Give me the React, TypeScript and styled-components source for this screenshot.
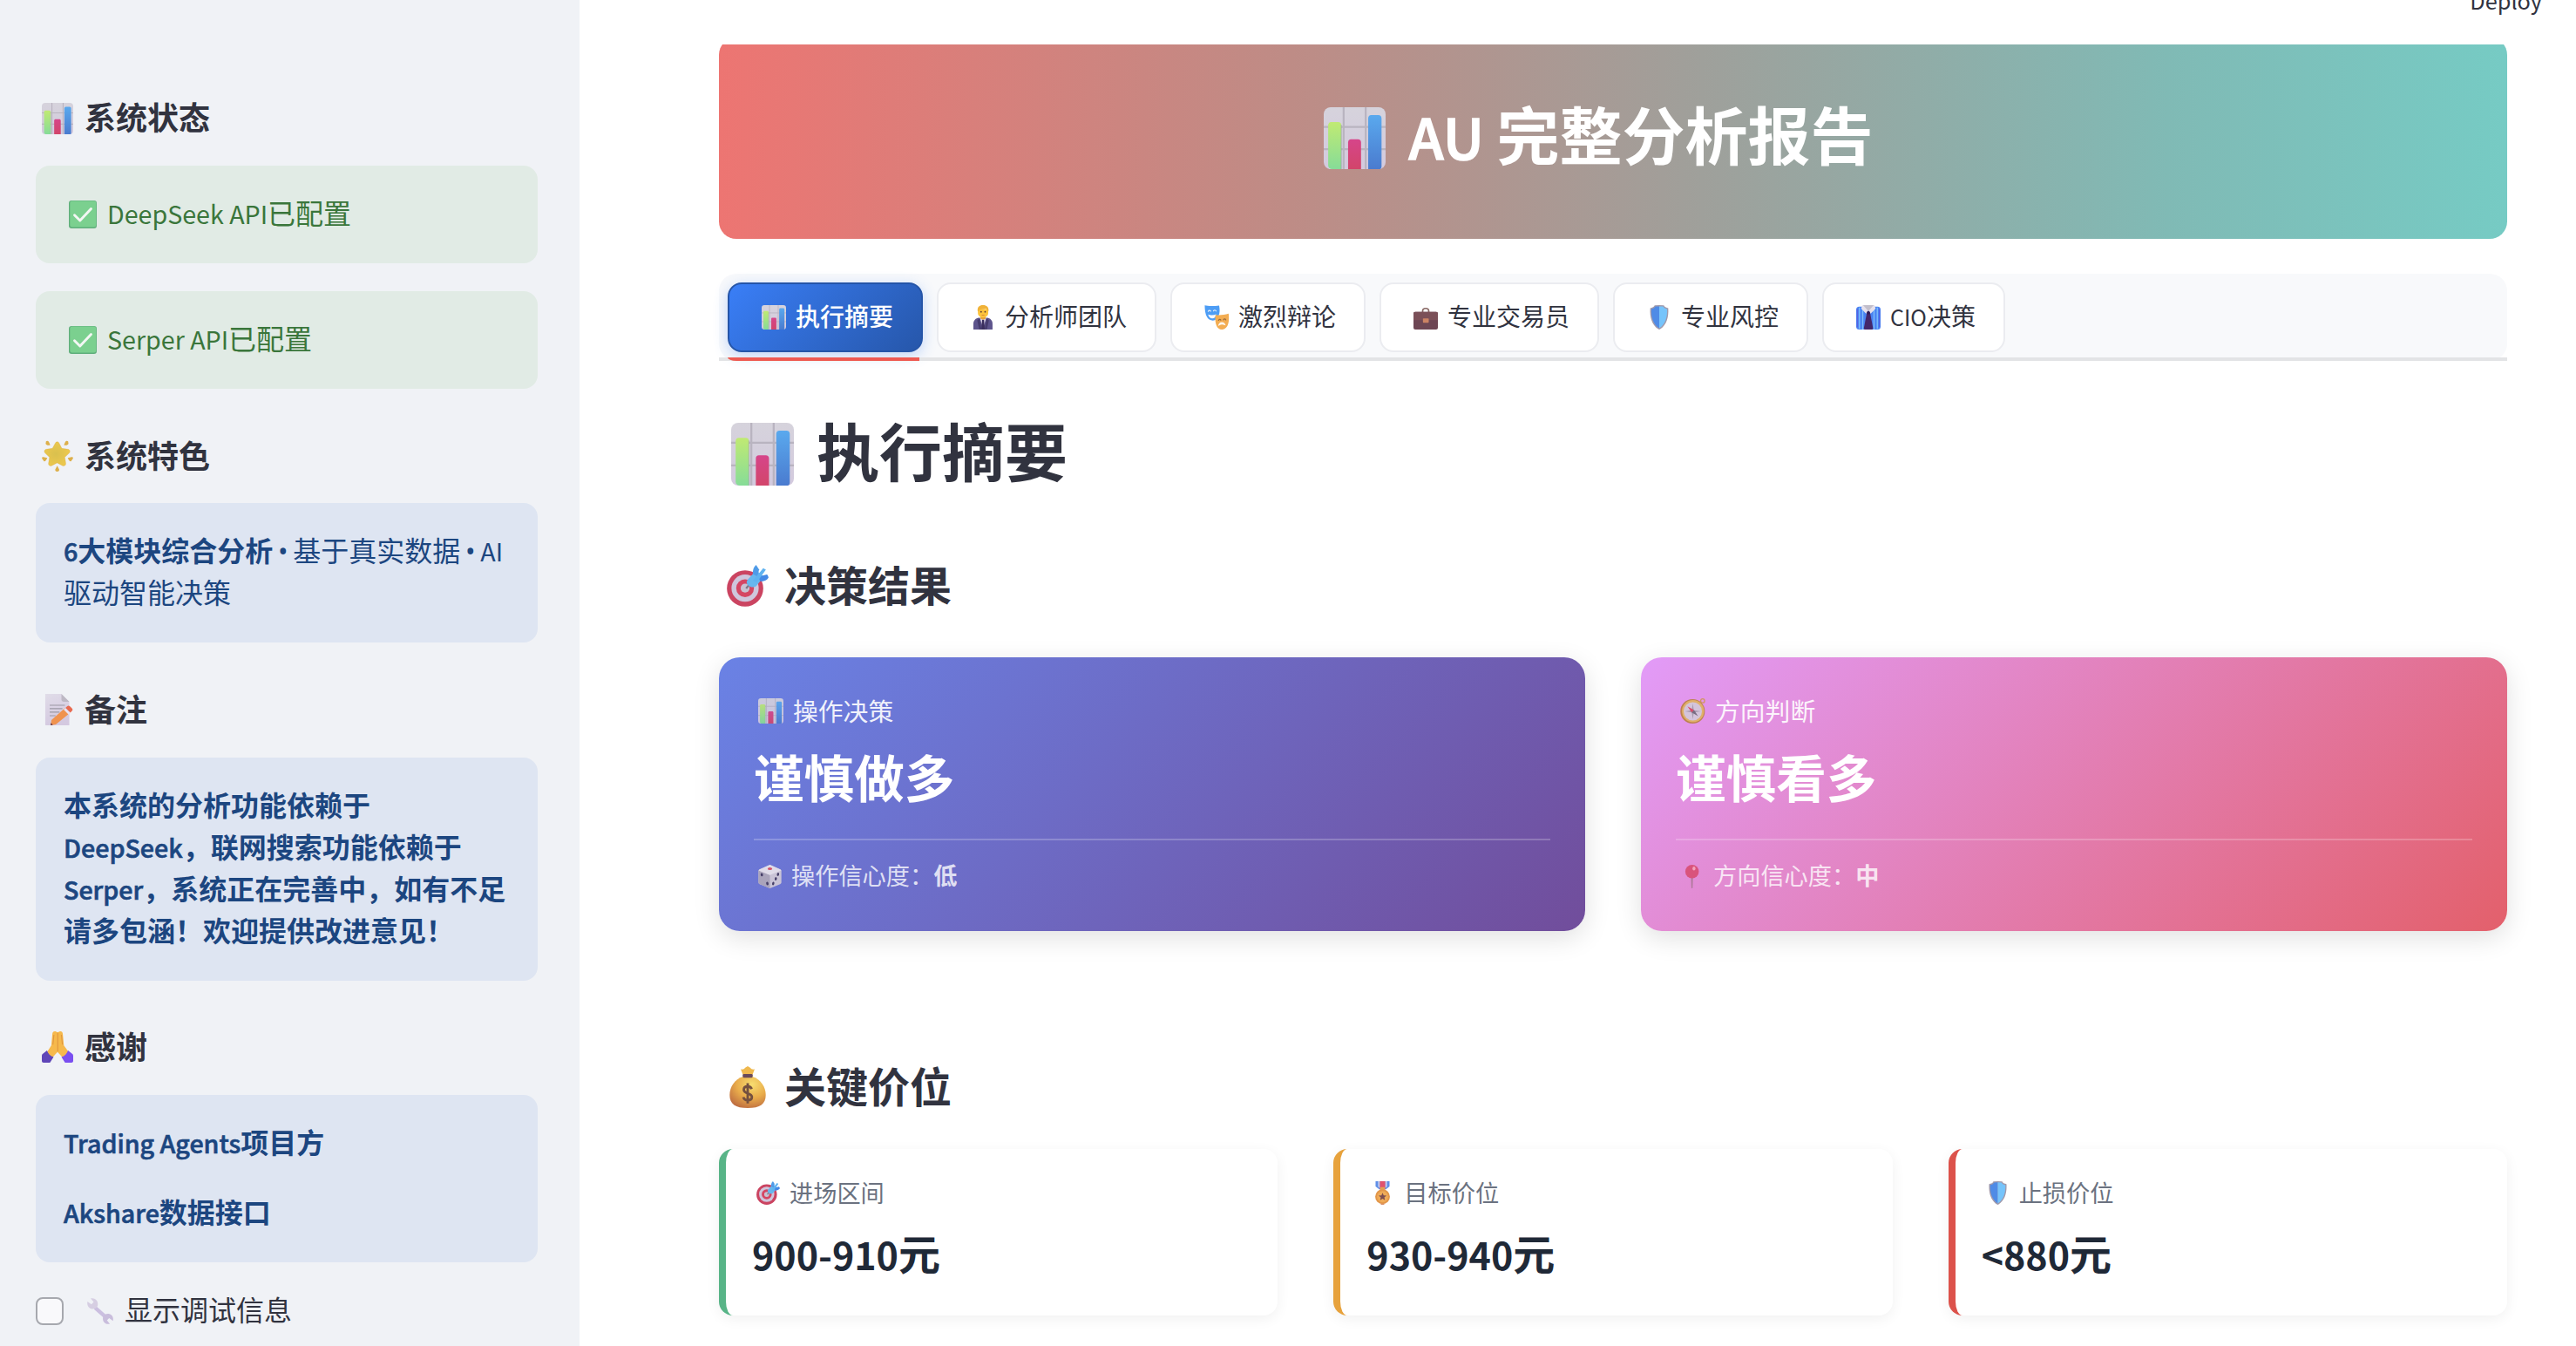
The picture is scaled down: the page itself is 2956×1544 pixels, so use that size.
import React from "react";
import styled, { createGlobalStyle, css } from "styled-components";

const GlobalStyle = createGlobalStyle`
  * { box-sizing: border-box; }
  html, body { margin: 0; padding: 0; }
  body {
    background: #fff;
    color: #31333f;
    font-family: "Noto Sans CJK SC", "Noto Sans", sans-serif;
    font-size: 32px;
    line-height: 48px;
    overflow: hidden;
  }
`;

/* ---------- icons ---------- */

const Glyph = styled.svg<{ $size: number }>`
  display: block;
  flex: none;
  width: ${(p) => p.$size}px;
  height: ${(p) => p.$size}px;
  overflow: visible;
`;

const Chart = () => (
  <>
    <defs>
      <linearGradient id="c-bg" x1="0" y1="0" x2="0" y2="1">
        <stop offset="0" stopColor="#d6d3dc" />
        <stop offset="1" stopColor="#d3cade" />
      </linearGradient>
      <linearGradient id="c-g" x1="0" y1="0" x2="0" y2="1">
        <stop offset="0" stopColor="#c0ea73" />
        <stop offset="1" stopColor="#86dc98" />
      </linearGradient>
      <linearGradient id="c-r" x1="0" y1="0" x2="0" y2="1">
        <stop offset="0" stopColor="#d6458a" />
        <stop offset="1" stopColor="#d2456a" />
      </linearGradient>
      <linearGradient id="c-b" x1="0" y1="0" x2="0" y2="1">
        <stop offset="0" stopColor="#5aa9ee" />
        <stop offset="1" stopColor="#4a7bcf" />
      </linearGradient>
    </defs>
    <rect width="32" height="32" rx="3.6" fill="url(#c-bg)" />
    <path d="M10.3 0v32M21.7 0v32M0 10.2h32M0 21.7h32" stroke="#b9b4c0" strokeWidth="1" />
    <path d="M2.300 9.400c0-1 .6-1.700 1.500-1.700h3.700c1 0 1.600.7 1.600 1.700V32H4.200C3 32 2.300 31 2.300 30z" fill="url(#c-g)" />
    <path d="M12.600 18.200c0-1 .6-1.600 1.500-1.600h3.600c1 0 1.600.6 1.600 1.600V32h-6.700z" fill="url(#c-r)" />
    <path d="M23 5.700c0-1 .6-1.700 1.500-1.700h3.800c1 0 1.600.7 1.600 1.700V30.600c0 .9-.5 1.400-1.200 1.400H23z" fill="url(#c-b)" />
    <path d="M9.100 9v23" stroke="#8e8aa0" strokeOpacity=".35" strokeWidth=".6" />
  </>
);

const Check = () => (
  <>
    <rect width="32" height="32" rx="3.2" fill="#5fae7b" />
    <rect x="1.3" y=".6" width="30" height="29.8" rx="2.6" fill="#7bd08f" />
    <path d="M6.5 16.800l6.300 6.200L25.500 9.500" fill="none" stroke="#f3f7f4" strokeWidth="2.9" strokeLinecap="round" strokeLinejoin="round" />
  </>
);

const Star = () => (
  <>
    <defs>
      <radialGradient id="s-g" cx=".45" cy=".5" r=".6">
        <stop offset="0" stopColor="#d9c04e" />
        <stop offset="1" stopColor="#efc94e" />
      </radialGradient>
    </defs>
    <path d="M13.800 1.900c.9-1.700 2.900-1.700 3.700 0l2.700 5.400 6 .9c1.900.3 2.600 2.500 1.200 3.900l-4.300 4.300 1 6.200c.3 1.900-1.600 3.200-3.300 2.300L15.600 22l-5.300 2.900c-1.700.9-3.500-.4-3.200-2.300l1-6.200-4.300-4.300C2.400 10.700 3.100 8.500 5 8.200l6-.9z" transform="translate(-.6 1) scale(1.04 1)" fill="url(#s-g)" stroke="#d9a441" strokeOpacity=".5" strokeWidth=".5" />
    <path d="M4.300 1.200c1-.9 2.300-.5 2.800.4l1.500 3.200c-2.400.7-4 .2-4.700-1.300zM26.800 1.200c-1-.9-2.300-.5-2.800.4l-1.500 3.200c2.400.7 4 .2 4.700-1.300zM.2 18.600c-.2-1 .5-1.600 1.400-1.400l4 .9c-.8 2.200-1.900 3.700-3.300 3.500zM31.800 18.600c.2-1-.5-1.600-1.400-1.400l-4 .9c.8 2.200 1.900 3.700 3.300 3.500zM15.700 26l2 3.800c.3 1.300-.6 2.200-2 2.200s-2.300-.9-2-2.200z" fill="#ddb04b" />
  </>
);

const Memo = () => (
  <>
    <defs>
      <linearGradient id="m-p" x1="0" y1="0" x2=".3" y2="1">
        <stop offset="0" stopColor="#e0dce8" />
        <stop offset="1" stopColor="#d4c9e0" />
      </linearGradient>
    </defs>
    <path d="M3.500 0H20l8 8v24H4.500c-.6 0-1-.4-1-1z" fill="url(#m-p)" />
    <path d="M20 0l8 8h-5.500C21 8 20 7 20 5.500z" fill="#bdb8c4" />
    <path d="M8 11.600h15.500M8 15h13M8 18.500h10M8 22.200h6" stroke="#9b98a4" strokeWidth="1" />
    <path d="M23.500 14.500l5 5L14.300 31 9 32l.8-5.400z" fill="#f0934f" />
    <path d="M22.300 16l5 5 1.800-1.700-5-5z" fill="#e9e3f2" />
    <path d="M24.200 14.200l1.600-1.600c1-1 2-.8 2.900 0l2 2c.9 1 .9 1.900 0 2.800l-1.600 1.800z" fill="#e86a50" />
    <path d="M9.300 29.500L9 32l2.300-.5z" fill="#5b3348" />
  </>
);

const Pray = () => (
  <>
    <path d="M10.800 2.200c.5-1.800 1.900-2.500 3.400-2l1.900.9 2-.9c1.700-.4 2.800.4 3.200 2l1.200 12.300 5.500 7.500-6 5.500-6-6.500-6 6.500-5.500-5 5.200-8z" fill="#f6b94c" />
    <path d="M16.200 1.500v19M12.300 3.500l-1 10M20 3.500l1 10" stroke="#e0963f" strokeWidth="1" fill="none" />
    <path d="M5.300 19.500c1 3.400 3.300 5.600 6.700 6.800L8.300 32H1.800C.7 32 0 31.300 0 30v-5c0-.8.3-1.400.8-1.800z" fill="#5f46b8" />
    <path d="M26.700 19.500c-1 3.400-3.300 5.600-6.700 6.800l3.700 5.700h6.500c1.100 0 1.800-.7 1.800-2v-5c0-.8-.3-1.400-.8-1.800z" fill="#7a4ff0" />
  </>
);

const Wrench = () => (
  <>
    <path d="M9.800 11.800l12.400 11" stroke="#cbbfe0" strokeWidth="4.6" />
    <path d="M4.300.4L8 4.800 5.200 7.700.4 4.200C-.3 8 1 12.300 5.600 13.200c3 .5 6-1 7.300-4C13.900 5 11.200-.6 4.300.4z" fill="#d6cee2" />
    <path d="M27.800 31.700l-3.500-4.500 2.600-2.800 4.800 3.700c.8-4-.8-8-5.200-8.900-3-.5-5.900 1-7 3.900-1.200 4.200 1.500 9.600 8.300 8.600z" fill="#c9bddc" />
  </>
);

const Person = () => (
  <>
    <path d="M3.400 32v-7.500C3.400 20 6.500 17 10.500 16.500h11c4 .5 7 3.500 7 8V32z" fill="#5d548c" />
    <path d="M11.800 16.300h8.600L16.100 30z" fill="#e6e0f0" />
    <path d="M14.800 19h2.600l.9 13h-4.400z" fill="#3b2f5e" />
    <path d="M11.500 17l2.500 15h-3L8.500 20zM20.700 17l-2.500 15h3l2.500-12z" fill="#463c6e" />
    <path d="M12.800 13.500h6.600v4.200c-1 1.600-5.600 1.600-6.600 0z" fill="#e6a038" />
    <path d="M9.300 5h13.600v5.300c0 3.600-3 6-6.800 6s-6.800-2.400-6.800-6z" fill="#fdc43c" />
    <path d="M8.900 7.500C8.600 2.500 11 0 16 0s7.600 2.500 7.300 7.500l-1 1.200c-.3-1.900-1.200-3.200-2.500-4-2.800 1.200-6.700.6-8.300 1.600l-1.400 2.400z" fill="#f0b238" />
    <circle cx="13.500" cy="8.800" r="1.050" fill="#5a3a30" />
    <circle cx="18.800" cy="8.800" r="1.050" fill="#5a3a30" />
    <path d="M13.700 12.800c1.500 1 3.400 1 4.800 0z" fill="#b44a38" />
  </>
);

const Masks = () => (
  <>
    <path d="M.5.300c5 1.300 13 .9 18.900.2 1 5 1 9.500-.6 13.300-1.400 3.900-4 6.400-7.600 6.600C4.200 19.600.7 14 .5.300z" fill="#4d9df5" />
    <path d="M5 8.200c.8-1.500 2.600-1.500 3.400-.2M12 7.600c.8-1.500 2.800-1.300 3.400.2" stroke="#e9f1fb" strokeWidth="1.300" fill="none" strokeLinecap="round" />
    <path d="M4.900 12.400c3 1.300 7.400 1.100 10.700-.4-.5 3.300-2.200 5.400-5 5.500-2.800.2-5-2.100-5.700-5.100z" fill="#f8f8fc" />
    <path d="M14.500 12.800c5 .9 11.500.1 17.300-1.600 1.200 9.500 0 19.600-8 20.700-6.900.8-10.400-6.900-9.300-19.100z" fill="#f3ad52" />
    <path d="M18.600 20c.6-1.500 2.200-1.700 3-.4M25 19.300c.7-1.500 2.500-1.500 3.200 0" stroke="#9a6a3c" strokeWidth="1.300" fill="none" strokeLinecap="round" />
    <path d="M17.900 27.400c.6-3 2.400-5 5-5.100 2.600 0 4.500 1.700 5.100 4.400-1.500-.2-2.800-1.300-5-1.200-2.100.1-3.300 1.700-5.100 1.900z" fill="#fdf6ee" />
  </>
);

const Briefcase = () => (
  <>
    <path d="M12 10V7.500C12 5.500 13.500 4.300 16 4.300s4 1.200 4 3.200V10" stroke="#8a6a66" strokeWidth="1.9" fill="none" />
    <rect x="0" y="8.800" width="32" height="23.200" rx="2.400" fill="#6d4654" />
    <path d="M0 10.800c0-1.200.8-2 2-2h28c1.200 0 2 .8 2 2v9H0z" fill="#7b5058" />
    <rect x="12.400" y="17.300" width="7.600" height="5.800" rx=".8" fill="#cc8364" />
  </>
);

const Shield = () => (
  <>
    <path d="M16 0l6 .3c.8 1.700 2 2.700 4 3l1.800.6c.8 12.100-2.300 22.100-10.600 27.600L16 32l-1.200-.5C6.500 26 3.400 16 4.200 3.900L6 3.300c2-.3 3.200-1.300 4-3z" fill="#a09aac" />
    <path d="M16 1.600l-5 .1C9.900 3.600 8.300 4.700 5.700 5 5.200 15.500 8 25 16 30.300z" fill="#4f8be6" />
    <path d="M16 1.600l5 .1c1.100 1.900 2.700 3 5.300 3.300.5 10.500-2.300 20-10.300 25.300z" fill="#76c4fb" />
  </>
);

const Shirt = () => (
  <>
    <rect y="2" width="32" height="30" rx="4" fill="#4a83f2" />
    <path d="M4.300 3v28M8.600 3v29M23.400 3v29M27.700 3v28" stroke="#7fc0fb" strokeWidth="1.5" />
    <path d="M1.500 5v24M30.500 5v24" stroke="#5c55dc" strokeWidth="1" />
    <path d="M14 10h4.200l4 20.500L21 32H11l-1-1.500z" fill="#44276a" />
    <path d="M8 0h16l1.500 4.500-6.500 6.500-3-3.500-3 3.500-6.500-6.500z" fill="#e6e1ec" />
    <path d="M9 0h14l-7 8z" fill="#c3bfcb" />
    <path d="M13.700 9l2.300-1.700L18.300 9l-1 3h-2.600z" fill="#2f1b55" />
  </>
);

const Target = () => (
  <>
    <circle cx="14" cy="18" r="13.900" fill="#cb4461" />
    <circle cx="14" cy="17.800" r="10.400" fill="#cfc6dc" />
    <circle cx="14" cy="17.800" r="6.800" fill="#d54663" />
    <circle cx="14" cy="17.800" r="3.400" fill="#c9c2d2" />
    <path d="M14.800 18L21 10.600" stroke="#7d7a88" strokeWidth="1.500" />
    <path d="M15.800 11.500L22.500 4.200 28.300 9l-5.600 7c-2 1.600-4.600 1.200-6.300-.4-1.300-1.300-1.600-2.600-.6-4.100z" fill="#67b7ee" />
    <path d="M19.900 6.800c0-3.300.7-5 2.500-6.800L24.700 3.500 23.500 9z" fill="#4f9be8" />
    <path d="M24.200 9l6.500-1.700c.8.700 1.100 1.600 1.200 2.600-1.300 2-3.400 2.800-6.400 2.800z" fill="#4489e6" />
    <path d="M20 12l7.900-9.500 2 1.200-7 9.800z" fill="#5fb2f0" />
  </>
);

const Compass = () => (
  <>
    <circle cx="28.500" cy="3.200" r="2.500" fill="none" stroke="#cf9850" strokeWidth="1.400" />
    <circle cx="15.800" cy="16.500" r="15.500" fill="#b9803f" />
    <circle cx="16.300" cy="16.300" r="14" fill="#e0b25c" />
    <circle cx="16" cy="16.500" r="11.600" fill="#d3cada" />
    <path d="M16 6.500l1.300 8.700 8.700 1.300-8.700 1.300L16 26.500l-1.300-8.700L6 16.500l8.700-1.300z" fill="#9f9aa8" />
    <path d="M9.300 10.300l8.300 4.500-3 3z" fill="#d9435e" />
    <path d="M22.700 22.700l-5.100-7.900-3 3z" fill="#6d6878" />
  </>
);

const Dice = () => (
  <>
    <path d="M16 0l14 6.300c1 .5 1.600 1.200 1.600 2.300v15.200c0 1.200-.6 2-1.700 2.500L16 32 2.200 26.300C1 25.800.4 25 .4 23.800V8.600c0-1.100.6-1.800 1.600-2.300z" fill="#c9c3d6" />
    <path d="M.6 7.600L16 14v18L2.200 26.300C1 25.800.4 25 .4 23.800z" fill="#aaa4bb" />
    <path d="M16 0l14 6.300L31.400 7.600 16 14 .6 7.600 2 6.300z" fill="#e0dce9" />
    <ellipse cx="16" cy="5.300" rx="3.100" ry="1.800" fill="#d4546a" />
    <g fill="#463f68">
      <ellipse cx="5" cy="13.500" rx="1.600" ry="2.300" transform="rotate(-12 5 13.500)" />
      <ellipse cx="12.500" cy="25.500" rx="1.600" ry="2.300" transform="rotate(-12 12.500 25.500)" />
      <ellipse cx="27" cy="13" rx="1.500" ry="2.300" transform="rotate(12 27 13)" />
      <ellipse cx="24" cy="19" rx="1.500" ry="2.300" transform="rotate(12 24 19)" />
      <ellipse cx="20.500" cy="25.500" rx="1.500" ry="2.300" transform="rotate(12 20.500 25.500)" />
    </g>
  </>
);

const Pin = () => (
  <>
    <path d="M14.800 17h2.600l-.4 14c-.2 1.300-1.600 1.300-1.800 0z" fill="#b07a9c" />
    <circle cx="16.200" cy="9.200" r="9.200" fill="#d9537c" />
    <ellipse cx="18.800" cy="5" rx="2" ry="2.600" fill="#f3a3bd" />
  </>
);

const MoneyBag = () => (
  <>
    <defs>
      <radialGradient id="b-g" cx=".62" cy=".25" r=".85">
        <stop offset="0" stopColor="#f7dd70" />
        <stop offset=".5" stopColor="#e9ac4b" />
        <stop offset="1" stopColor="#b9663f" />
      </radialGradient>
    </defs>
    <path d="M12.300 6.500L10.700 2.400c1.700.2 2.700-.1 3.400-1.200L16 0l1.900 1.200c.7 1.100 1.700 1.400 3.400 1.200l-1.600 4.100z" fill="#efb84e" />
    <path d="M12.400 8h7.200c6.300 1.800 10.200 8 10.200 14 0 7-4.300 10-13.800 10S2.200 29 2.200 22c0-6 3.900-12.200 10.200-14z" fill="url(#b-g)" />
    <rect x="12.200" y="6" width="7.600" height="2.800" rx=".9" fill="#69495a" />
    <path d="M19 17.500c-.4-1.300-1.400-2-3-2-1.800 0-3 .9-3 2.500 0 3.700 6.200 2 6.200 5.500 0 1.600-1.300 2.600-3.200 2.600s-3-.9-3.300-2.400M16 13v15.500" fill="none" stroke="#74503f" strokeWidth="1.900" />
  </>
);

const Medal = () => (
  <>
    <path d="M6.500 0h19v7L20.500 11h-9L6.500 7z" fill="#5f8fe8" />
    <path d="M10 0h2.400v9.500L10 7.500zM19.600 0H22v7.500l-2.400 2z" fill="#c9d0ee" />
    <path d="M12.400 0h7.200v11h-7.200z" fill="#e0526d" />
    <rect x="12.800" y="8" width="6.400" height="4.500" rx="1" fill="#e4a052" />
    <circle cx="16" cy="21" r="10" fill="#e2964a" />
    <circle cx="16" cy="21" r="7.600" fill="#efab58" />
    <path d="M16 15.600l1.500 3.600 3.900.3-3 2.500.9 3.800-3.300-2-3.300 2 .9-3.800-3-2.500 3.900-.3z" fill="#7c4d50" />
    <path d="M12.600 30.500h6.800L17.600 32h-3.200z" fill="#d98f6a" />
  </>
);

const icons = {
  chart: Chart, check: Check, star: Star, memo: Memo, pray: Pray, wrench: Wrench,
  person: Person, masks: Masks, briefcase: Briefcase, shield: Shield, shirt: Shirt,
  target: Target, compass: Compass, dice: Dice, pin: Pin, bag: MoneyBag, medal: Medal,
};
type IconName = keyof typeof icons;

const Icon = ({ name, size }: { name: IconName; size: number }) => {
  const Drawing = icons[name];
  return (
    <Glyph $size={size} viewBox="0 0 32 32" aria-hidden="true">
      <Drawing />
    </Glyph>
  );
};

/* ---------- shared text pieces ---------- */

/* Latin letters run large beside Han characters in this family. */
const Latin = styled.span<{ $semi?: boolean }>`
  font-size: 0.895em;
  line-height: 0;
  ${(p) =>
    p.$semi &&
    css`
      font-weight: 500;
      -webkit-text-stroke: 0.022em currentColor;
    `}
`;

/* Optical lift that centres Han glyphs on the icon beside them. */
const Words = styled.span<{ $lift?: number }>`
  margin-top: -${(p) => p.$lift ?? 0.12}em;
  white-space: pre;
`;

const Bullet = styled.span`
  display: inline-block;
  width: 23px;
  font-family: "Open Sans", "Noto Sans", sans-serif;
  line-height: 1;
  text-align: center;
`;

const Line = styled.div<{ $lead: number; $gap: number }>`
  display: flex;
  align-items: center;
  padding-left: ${(p) => p.$lead}px;
  gap: ${(p) => p.$gap}px;
`;

/* ---------- layout ---------- */

const Page = styled.div`
  display: flex;
  width: 100%;
  height: 1544px;
  overflow: hidden;
`;

const Sidebar = styled.aside`
  flex: none;
  width: 665px;
  height: 100%;
  padding: 59px 48px 0 41px;
  background: #f0f2f6;
`;

const SideHeading = styled.h3`
  display: flex;
  align-items: center;
  gap: 13px;
  height: 131.2px;
  margin: 0;
  padding: 22px 0 0 7px;
  font-size: 36px;
  line-height: 44px;
  font-weight: 700;
`;

const Notice = styled.div<{ $tone: "success" | "info" }>`
  padding: ${(p) => (p.$tone === "success" ? "32px 0 32px 32px" : "29px 0 35px 32px")};
  border-radius: 16px;
  color: ${(p) => (p.$tone === "success" ? "#3a763b" : "#1c4680")};
  background: ${(p) => (p.$tone === "success" ? "#e1ebe5" : "#dee5f2")};
`;

const NoticeLine = styled(Line)`
  height: 48px;
`;

const NoticeStack = styled.div`
  display: flex;
  flex-direction: column;
  gap: 32px;
`;

const Paragraph = styled.p`
  margin: 0;
  white-space: nowrap;
  & + & { margin-top: 32px; }
`;

const Strong = styled.strong`
  font-weight: 700;
`;

const DebugToggle = styled.label`
  display: flex;
  align-items: center;
  height: 48px;
  margin-top: 32px;
`;

const Box = styled.span`
  width: 32px;
  height: 32px;
  border: 2px solid #a6a8ae;
  border-radius: 8px;
  background: #f9f9fb;
`;

const Main = styled.main`
  flex: 1;
  min-width: 0;
  height: 100%;
  overflow: hidden;
  background: #fff;
`;

const TopBar = styled.header`
  display: flex;
  justify-content: flex-end;
  align-items: flex-start;
  height: 51px;
  padding-right: 39px;
  font-size: 28.3px;
  line-height: 11px;
`;

const Content = styled.div`
  display: flex;
  flex-direction: column;
  height: 1493px;
  padding: 0 79px 0 160px;
  overflow: hidden;
`;

const Banner = styled.div`
  flex: none;
  display: flex;
  justify-content: center;
  align-items: center;
  gap: 27px;
  height: 231px;
  margin-top: -8px;
  padding: 0 34px 0 0;
  border-radius: 20px;
  color: #fff;
  font-size: 72px;
  line-height: 86px;
  font-weight: 700;
  background: linear-gradient(90deg, #ed7572, #be8c86 32%, #9fa09b 55%, #80bab5 81%, #76cbc4);
`;

const TabBar = styled.nav`
  flex: none;
  position: relative;
  display: flex;
  gap: 16px;
  height: 100px;
  margin-top: 40px;
  padding: 10px;
  border-radius: 20px;
  background: #f8f9fb;
  &::after {
    content: "";
    position: absolute;
    left: 0;
    right: 0;
    bottom: 0;
    height: 4px;
    background: #e3e4e6;
  }
`;

const Tab = styled.button<{ $active?: boolean; $width: number }>`
  display: flex;
  align-items: center;
  gap: 11px;
  width: ${(p) => p.$width}px;
  height: 80px;
  padding: 0 0 0 37px;
  border: 2px solid #ebecf0;
  border-radius: 16px;
  background: #fff;
  color: #31333f;
  font: inherit;
  font-size: 28px;
  white-space: nowrap;
  ${(p) =>
    p.$active &&
    css`
      border-color: #2555a8;
      color: #fff;
      font-weight: 500;
      background: linear-gradient(135deg, #3a7ff8, #2656a9) border-box;
      box-shadow: 0 4px 16px rgba(59, 130, 246, 0.3);
    `}
`;

const TabMarker = styled.span`
  position: absolute;
  z-index: 1;
  left: 10px;
  bottom: 0;
  width: 220px;
  height: 4px;
  border-bottom-left-radius: 10px 4px;
  background: #ee5a52;
`;

const PageTitle = styled.h1`
  display: flex;
  align-items: center;
  gap: 26px;
  flex: none;
  height: 210px;
  margin: 0;
  padding: 3px 0 0 14px;
  font-size: 72px;
  line-height: 86px;
  font-weight: 700;
`;

const SectionTitle = styled.h2<{ $above: number; $below: number }>`
  display: flex;
  align-items: center;
  gap: 18px;
  flex: none;
  height: 94px;
  margin: ${(p) => p.$above}px 0 ${(p) => p.$below}px;
  padding: 1px 0 0 9px;
  font-size: 48px;
  line-height: 58px;
  font-weight: 700;
`;

const Columns = styled.div<{ $count: number }>`
  flex: none;
  display: grid;
  grid-template-columns: repeat(${(p) => p.$count}, 1fr);
  gap: 64px;
`;

const DecisionCard = styled.section<{ $from: string; $to: string }>`
  height: 314px;
  padding: 40px;
  border-radius: 24px;
  color: #fff;
  background: linear-gradient(135deg, ${(p) => p.$from}, ${(p) => p.$to});
  box-shadow: 0 8px 30px rgba(0, 0, 0, 0.12);
`;

const DecisionLabel = styled(Line)`
  height: 43px;
  font-size: 28.8px;
  opacity: 0.9;
`;

const DecisionValue = styled.div`
  height: 125px;
  padding-top: 10px;
  font-size: 57.6px;
  line-height: 86px;
  font-weight: 700;
`;

const DecisionFoot = styled(Line)`
  height: 84px;
  border-top: 2px solid rgba(255, 255, 255, 0.22);
  font-size: 27.2px;
  color: rgba(255, 255, 255, 0.8);
`;

const PriceCard = styled.section<{ $accent: string }>`
  height: 191px;
  padding: 30px 32px 0 30px;
  border-left: 8px solid ${(p) => p.$accent};
  border-radius: 16px;
  background: #fff;
  box-shadow: 0 4px 16px rgba(0, 0, 0, 0.06);
`;

const PriceLabel = styled(Line)`
  height: 41px;
  color: #6b7280;
  font-size: 27.2px;
`;

const PriceValue = styled.div`
  padding-top: 11px;
  color: #1f2937;
  font-size: 48px;
  line-height: 72px;
  font-weight: 700;
`;

/* ---------- data ---------- */

const tabs: { icon: IconName; label: React.ReactNode; width: number }[] = [
  { icon: "chart", label: "执行摘要", width: 224 },
  { icon: "person", label: "分析师团队", width: 252 },
  { icon: "masks", label: "激烈辩论", width: 224 },
  { icon: "briefcase", label: "专业交易员", width: 252 },
  { icon: "shield", label: "专业风控", width: 224 },
  { icon: "shirt", label: <><Latin>CIO</Latin>决策</>, width: 210 },
];

const decisions = [
  { icon: "chart", label: "操作决策", value: "谨慎做多", footIcon: "dice", foot: "操作信心度：", level: "低", from: "#6a82e5", to: "#714d9b" },
  { icon: "compass", label: "方向判断", value: "谨慎看多", footIcon: "pin", foot: "方向信心度：", level: "中", from: "#e29bf8", to: "#e3606b" },
] as const;

const prices = [
  { icon: "target", label: "进场区间", value: "900-910", accent: "#58b487" },
  { icon: "medal", label: "目标价位", value: "930-940", accent: "#e7a23c" },
  { icon: "shield", label: "止损价位", value: "<880", accent: "#dc524b" },
] as const;

const apis = ["DeepSeek API", "Serper API"];

export default function App() {
  return (
    <>
      <GlobalStyle />
      <Page>
        <Sidebar>
          <SideHeading><Icon name="chart" size={36} /><Words>系统状态</Words></SideHeading>
          <NoticeStack>
            {apis.map((api) => (
              <Notice key={api} $tone="success">
                <NoticeLine $lead={6} $gap={12}>
                  <Icon name="check" size={32} />
                  <Words $lift={0.18}><Latin>{api}</Latin>已配置</Words>
                </NoticeLine>
              </Notice>
            ))}
          </NoticeStack>

          <SideHeading><Icon name="star" size={36} /><Words>系统特色</Words></SideHeading>
          <Notice $tone="info">
            <Paragraph>
              <Strong><Latin $semi>6</Latin>大模块综合分析</Strong>
              <Bullet>•</Bullet>基于真实数据<Bullet>•</Bullet><Latin>AI</Latin>
              <br />
              驱动智能决策
            </Paragraph>
          </Notice>

          <SideHeading><Icon name="memo" size={36} /><Words>备注</Words></SideHeading>
          <Notice $tone="info">
            <Paragraph>
              <Strong>
                本系统的分析功能依赖于<br />
                <Latin $semi>DeepSeek</Latin>，联网搜索功能依赖于<br />
                <Latin $semi>Serper</Latin>，系统正在完善中，如有不足<br />
                请多包涵！欢迎提供改进意见！
              </Strong>
            </Paragraph>
          </Notice>

          <SideHeading><Icon name="pray" size={36} /><Words>感谢</Words></SideHeading>
          <Notice $tone="info">
            <Paragraph><Strong><Latin $semi>Trading Agents</Latin>项目方</Strong></Paragraph>
            <Paragraph><Strong><Latin $semi>Akshare</Latin>数据接口</Strong></Paragraph>
          </Notice>

          <DebugToggle>
            <Box />
            <Line $lead={27} $gap={13}>
              <Icon name="wrench" size={30} />
              <Words $lift={0.17}>显示调试信息</Words>
            </Line>
          </DebugToggle>
        </Sidebar>

        <Main>
          <TopBar><Latin>Deploy</Latin></TopBar>
          <Content>
            <Banner>
              <Icon name="chart" size={71} />
              <Words $lift={0.17}><Latin $semi>AU </Latin>完整分析报告</Words>
            </Banner>

            <TabBar>
              {tabs.map((t, i) => (
                <Tab key={t.icon} $active={i === 0} $width={t.width}>
                  <Icon name={t.icon} size={28} />
                  <Words>{t.label}</Words>
                </Tab>
              ))}
              <TabMarker />
            </TabBar>

            <PageTitle><Icon name="chart" size={72} /><Words $lift={0.16}>执行摘要</Words></PageTitle>

            <SectionTitle $above={0} $below={36}><Icon name="target" size={48} /><Words>决策结果</Words></SectionTitle>
            <Columns $count={2}>
              {decisions.map((d) => (
                <DecisionCard key={d.label} $from={d.from} $to={d.to}>
                  <DecisionLabel $lead={5} $gap={11}>
                    <Icon name={d.icon} size={29} />
                    <Words $lift={0.07}>{d.label}</Words>
                  </DecisionLabel>
                  <DecisionValue>{d.value}</DecisionValue>
                  <DecisionFoot $lead={5} $gap={11}>
                    <Icon name={d.footIcon} size={27} />
                    <Words>{d.foot}<Strong>{d.level}</Strong></Words>
                  </DecisionFoot>
                </DecisionCard>
              ))}
            </Columns>

            <SectionTitle $above={131} $below={25}><Icon name="bag" size={48} /><Words>关键价位</Words></SectionTitle>
            <Columns $count={3}>
              {prices.map((p) => (
                <PriceCard key={p.label} $accent={p.accent}>
                  <PriceLabel $lead={5} $gap={11}>
                    <Icon name={p.icon} size={27} />
                    <Words>{p.label}</Words>
                  </PriceLabel>
                  <PriceValue><Latin>{p.value}</Latin>元</PriceValue>
                </PriceCard>
              ))}
            </Columns>
          </Content>
        </Main>
      </Page>
    </>
  );
}
